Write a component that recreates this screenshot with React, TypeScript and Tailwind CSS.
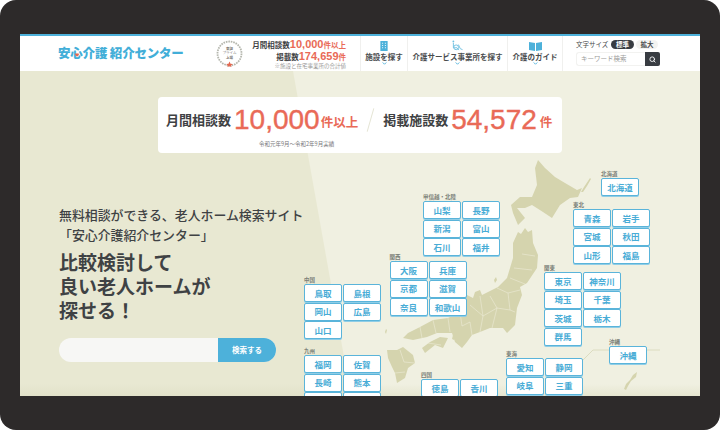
import { Search } from 'lucide-react';

const regions = [
  { name: '甲信越・北陸', pos: 'left-[403px] top-[122px]', items: ['山梨', '長野', '新潟', '富山', '石川', '福井'] },
  { name: '関西', pos: 'left-[369.5px] top-[182px]', items: ['大阪', '兵庫', '京都', '滋賀', '奈良', '和歌山'] },
  { name: '中国', pos: 'left-[284px] top-[205px]', items: ['鳥取', '島根', '岡山', '広島', '山口'] },
  { name: '九州', pos: 'left-[284px] top-[276px]', items: ['福岡', '佐賀', '長崎', '熊本', '大分', '宮崎'] },
  { name: '四国', pos: 'left-[401px] top-[300px]', items: ['徳島', '香川'] },
  { name: '北海道', pos: 'left-[581px] top-[99px]', items: ['北海道'] },
  { name: '東北', pos: 'left-[553px] top-[130px]', items: ['青森', '岩手', '宮城', '秋田', '山形', '福島'] },
  { name: '関東', pos: 'left-[524px] top-[193px]', items: ['東京', '神奈川', '埼玉', '千葉', '茨城', '栃木', '群馬'] },
  { name: '東海', pos: 'left-[486px] top-[279px]', items: ['愛知', '静岡', '岐阜', '三重'] },
  { name: '沖縄', pos: 'left-[589px] top-[267px]', items: ['沖縄'] },
];

function Region({ name, pos, items }: { name: string; pos: string; items: string[] }) {
  return (
    <div className={`absolute ${pos}`}>
      <div className="h-[8px] text-[5.5px] leading-[8px] font-bold text-[#7b8078]">{name}</div>
      <div className="grid grid-cols-[38px_38px] gap-x-px gap-y-[0.5px]">
        {items.map((p) => (
          <a key={p} className="flex h-[18px] items-center justify-center rounded-[2px] border border-[#5ab4da] bg-white text-[8.5px] font-bold text-[#48acd6] shadow-[0_1px_0_#8fcde6]">
            {p}
          </a>
        ))}
      </div>
    </div>
  );
}

function JapanMap() {
  return (
    <svg viewBox="20 71 680 325" className="absolute inset-0 h-full w-full" fill="#d5d4ae">
      {/* hokkaido */}
      <path d="M538 160L545 168 555 177 565 183 577 190 582 188 578 197 570 198 560 205 552 218 543 212 532 205 525 208 517 208 525 218 518 225 513 213 511 205 520 197 532 197 537 185 535 168Z" />
      {/* honshu */}
      <path d="M525 228L528 232 532 230 533 243 538 255 537 268 527 283 520 287 522 295 517 308 515 325 507 333 503 328 490 328 480 332 472 335 467 342 462 348 455 342 452 333 448 333 437 333 427 337 413 340 403 338 408 333 420 327 433 320 448 318 460 312 467 295 473 298 475 292 480 290 482 295 498 287 507 278 513 258 513 243 518 232 521 234Z" />
      {/* shikoku */}
      <path d="M422 348L430 342 440 337 448 338 443 348 435 345 425 353Z" />
      {/* kyushu */}
      <path d="M387 350L397 350 403 347 413 355 415 363 408 368 405 378 397 383 395 373 392 367 388 358Z" />
      {/* small islands */}
      <path d="M385 332l1-3 1 1-1 4zM494 280l2-3 1 3-2 3zM590 178l1 1-4 7-4 6-2 0 3-5zM453 335l2 1-1 4-2-1z" />
      {/* okinawa */}
      <path d="M637 372l-1 5-5 4-3 5-2 4-2-1 2-5 4-4 3-5z" />
      <path d="M583 360l10-10h67" fill="none" stroke="#dcdcc0" strokeWidth="1" />
      {/* prefecture lines */}
      <path d="M522 254L535 256M514 268L532 270M510 278L525 284M497 288L508 293 520 290M508 293L510 310 515 312M490 296L497 308 510 310M480 296L483 316 497 308M470 305L483 316 480 332M460 312L462 326 470 322M448 318L450 332M433 320L436 333M420 327L422 338M470 322L472 335M497 308L492 328M428 343L441 345M400 350L404 362 415 363M395 373L405 372" fill="none" stroke="#ecebd6" strokeWidth="0.6" />
    </svg>
  );
}

function Badge() {
  return (
    <div className="relative flex h-[27px] w-[27px] shrink-0 flex-col items-center justify-center rounded-full text-[#77756f]">
      <svg viewBox="0 0 27 27" className="absolute inset-0 h-full w-full">
        <circle cx="13.5" cy="13.5" r="12" fill="none" stroke="#b5b7ae" strokeWidth="1.8" strokeDasharray="1.6 0.9" />
        <path d="M13.5 21.500l1 2.200 2.300.2-1.800 1.500.6 1.600-2.100-.8-2.100.8.6-1.600-1.800-1.500 2.300-.2z" fill="#e4674f" />
      </svg>
      <span className="text-[3.5px] leading-[4.5px] font-bold">東証</span>
      <span className="text-[3.5px] leading-[4.5px]">プライム</span>
      <span className="text-[3.5px] leading-[4.5px] font-bold">上場</span>
    </div>
  );
}

function Chevron() {
  return (
    <svg viewBox="0 0 6 4" className="h-[3px] w-[5px]">
      <path d="M0.6 0.6L3 3l2.4-2.4" fill="none" stroke="#4db1da" strokeWidth="1.2" />
    </svg>
  );
}

function NavItem({ label, width, icon }: { label: string; width: string; icon: React.ReactNode }) {
  return (
    <a className={`flex h-full flex-col items-center border-l border-[#f0f0ee] pt-[4px] ${width}`}>
      <div className="flex h-[11px] items-end">{icon}</div>
      <span className="text-[7.5px] leading-[11px] font-bold whitespace-nowrap text-[#4a4c4e]">{label}</span>
      <Chevron />
    </a>
  );
}

export default function App() {
  return (
    <div className="h-[430px] w-[720px] overflow-hidden bg-white font-['Noto_Sans_CJK_JP','Noto_Sans',sans-serif]">
      <div className="flex h-full flex-col rounded-[16px] bg-[#2d2a2a] px-[20px] pt-[34px] pb-[34px]">
        <header className="flex h-[37px] shrink-0 items-stretch border-t-2 border-[#4db1da] bg-white">
          <div className="flex w-[196px] items-center pl-[38px]">
            <h2 className="relative text-[12.5px] font-black tracking-[-0.2px] whitespace-nowrap text-[#42aed8]">
              安心介護 紹介センター
              <svg viewBox="0 0 6 6" className="absolute top-[9px] left-[16.500px] h-[4px] w-[4px]">
                <path d="M3 5.500L.5 3a1.500 1.500 0 0 1 2.500-2 1.500 1.500 0 0 1 2.500 2z" fill="#e4674f" />
              </svg>
            </h2>
          </div>
          <div className="flex w-[130px] items-center">
            <Badge />
            <div className="ml-[4px] flex-1 text-right leading-none font-bold whitespace-nowrap text-[#3f4244]">
              <div className="h-[12px] text-[7.5px] leading-[12px]">
                月間相談数<span className="font-['Liberation_Sans',sans-serif] text-[11px] text-[#e96a57]">10,000</span><span className="text-[#e96a57]">件以上</span>
              </div>
              <div className="h-[12px] text-[7.5px] leading-[12px]">
                掲載数<span className="font-['Liberation_Sans',sans-serif] text-[11px] text-[#e96a57]">174,659</span><span className="text-[#e96a57]">件</span>
              </div>
              <div className="text-[5.5px] leading-[8px] font-normal text-[#9a9a98]">※施設と在宅事業所の合計値</div>
            </div>
          </div>
          <nav className="ml-[14px] flex">
            <NavItem
              label="施設を探す"
              width="w-[47px]"
              icon={
                <svg viewBox="0 0 8 11" className="h-[10px] w-[8px]">
                  <path d="M0 0h8v11H0z" fill="#4db1da" />
                  <path d="M2 2h1v1H2zM5 2h1v1H5zM2 4.500h1v1H2zM5 4.500h1v1H5zM2 7h1v1H2zM5 7h1v1H5z" fill="#fff" />
                </svg>
              }
            />
            <NavItem
              label="介護サービス事業所を探す"
              width="w-[100px]"
              icon={
                <svg viewBox="0 0 12 11" className="h-[11px] w-[11px]" fill="none" stroke="#6fc0e0" strokeWidth="1">
                  <circle cx="1.500" cy="1" r="1" fill="#6fc0e0" stroke="none" />
                  <path d="M1.500 2.500V8h4l2 2.500" />
                  <circle cx="4.500" cy="7.500" r="2.600" />
                  <path d="M7 4.500l2 4.500 2.500 1" />
                </svg>
              }
            />
            <NavItem
              label="介護のガイド"
              width="w-[55px]"
              icon={
                <svg viewBox="0 0 13 10" className="h-[10px] w-[13px]" fill="#4db1da">
                  <path d="M0 1l6 1v8L0 9zM13 1L7 2v8l6-1z" />
                </svg>
              }
            />
          </nav>
          <div className="flex-1 border-l border-[#f0f0ee] pt-[3px] pl-[13px]">
            <div className="flex h-[11px] items-center text-[6.5px] whitespace-nowrap text-[#4a4c4e]">
              <span className="w-[35px]">文字サイズ</span>
              <span className="flex h-[9px] w-[23px] items-center justify-center rounded-full bg-[#383c42] font-bold text-white">標準</span>
              <span className="ml-[2px] flex h-[9px] w-[22px] items-center justify-center rounded-full bg-[#f3f3f1] font-bold">拡大</span>
            </div>
            <div className="mt-[2px] flex h-[14px] w-[84px]">
              <div className="flex flex-1 items-center rounded-l-[3px] border border-r-0 border-[#f2f2f0] pl-[4px] text-[6.5px] whitespace-nowrap text-[#9a9a98]">キーワード検索</div>
              <div className="flex w-[15px] items-center justify-center rounded-r-[2px] bg-[#383c42] text-white">
                <Search size={7} strokeWidth={3} />
              </div>
            </div>
          </div>
        </header>

        <main className="relative flex-1 overflow-hidden bg-[#f0f0e1]">
          <div className="absolute inset-0 bg-[#e8e8d2] [clip-path:polygon(0_0,273px_0,331px_100%,0_100%)]" />
          <div className="absolute inset-x-0 bottom-0 h-[12px] bg-gradient-to-b from-transparent to-[#dcdcc0]/50" />
          <JapanMap />
          {regions.map((r) => (
            <Region key={r.name} {...r} />
          ))}

          <section className="relative mx-auto mt-[26px] h-[56px] w-[404px] rounded-[4px] bg-white">
            <div className="flex h-[43px] items-center pt-[2px] pl-[8px] font-bold whitespace-nowrap text-[#3f4244]">
              <span className="text-[13px]">月間相談数</span>
              <span className="ml-[3px] font-['Liberation_Sans',sans-serif] text-[28px] leading-none font-normal text-[#e96a57] [-webkit-text-stroke:0.4px_#e96a57]">10,000</span>
              <span className="ml-[1px] pt-[6px] text-[12.5px] text-[#e96a57]">件以上</span>
              <span className="ml-[12px] h-[24px] w-px rotate-[16deg] bg-[#e5e5d5]" />
              <span className="ml-[12px] text-[13px]">掲載施設数</span>
              <span className="ml-[3px] font-['Liberation_Sans',sans-serif] text-[28px] leading-none font-normal text-[#e96a57] [-webkit-text-stroke:0.4px_#e96a57]">54,572</span>
              <span className="ml-[3px] pt-[6px] text-[12.5px] text-[#e96a57]">件</span>
            </div>
            <p className="pl-[101px] text-[5.5px] leading-[8px] text-[#77777a]">令和元年9月～令和2年9月実績</p>
          </section>

          <section className="relative mt-[52px] w-[260px] pl-[39px] text-[#3f4244]">
            <p className="text-[12.900px] leading-[20px] font-medium whitespace-nowrap">無料相談ができる、老人ホーム検索サイト</p>
            <p className="text-[12.900px] leading-[20px] font-medium whitespace-nowrap">「安心介護紹介センター」</p>
            <h1 className="mt-[5px] text-[19px] leading-[24px] font-bold whitespace-nowrap">
              比較検討して
              <br />
              良い老人ホームが
              <br />
              探せる！
            </h1>
            <div className="mt-[16px] flex h-[24px] w-[217px] overflow-hidden rounded-full bg-[#f7f7f5]">
              <div className="flex-1" />
              <button className="w-[58px] bg-[#4db1da] text-[7.5px] font-bold text-white">検索する</button>
            </div>
          </section>
        </main>
      </div>
    </div>
  );
}
